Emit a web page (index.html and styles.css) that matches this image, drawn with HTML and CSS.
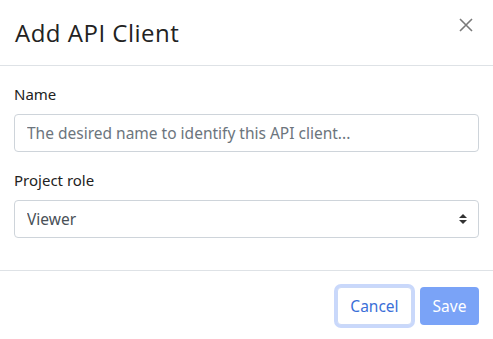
FILE: index.html
```html
<!DOCTYPE html>
<html lang="en">
<head>
    <meta charset="UTF-8">
    <meta name="viewport" content="width=device-width, initial-scale=1.0">
    <title>Add API Client</title>
    <link rel="stylesheet" href="styles.css">
</head>
<body>
    <div class="modal">
        <div class="modal-header">
            <h5 class="modal-title">Add API Client</h5>
            <button type="button" class="close" aria-label="Close">
                <svg width="14" height="14" viewBox="0 0 14 14">
                    <path d="M1 1 L13 13 M13 1 L1 13" stroke="#7a7a7a" stroke-width="1.6" fill="none"/>
                </svg>
            </button>
        </div>

        <div class="modal-body">
            <div class="form-group">
                <label for="name">Name</label>
                <input type="text" id="name" class="form-control" placeholder="The desired name to identify this API client...">
            </div>

            <div class="form-group">
                <label for="role">Project role</label>
                <div class="select-wrap">
                    <select id="role" class="form-control">
                        <option>Viewer</option>
                        <option>Editor</option>
                        <option>Owner</option>
                    </select>
                    <svg class="select-arrow" width="8" height="12" viewBox="0 0 8 12">
                        <path d="M0 5 L4 1 L8 5 Z M0 7 L8 7 L4 11 Z" fill="#333"/>
                    </svg>
                </div>
            </div>
        </div>

        <div class="modal-footer">
            <button type="button" class="btn btn-cancel">Cancel</button>
            <button type="button" class="btn btn-save" disabled>Save</button>
        </div>
    </div>
</body>
</html>
```

FILE: styles.css
```css
body {
    margin: 0;
    background: white;
    font-family: "Noto Sans", "Open Sans", sans-serif;
    color: #212529;
}

.modal {
    width: 493px;
    background: white;
}

.modal-header {
    display: flex;
    align-items: flex-start;
    justify-content: space-between;
    padding: 16px 15px 16px 15px;
    border-bottom: 1px solid #dee2e6;
}

.modal-title {
    margin: 0;
    font-family: "Open Sans", sans-serif;
    font-size: 24px;
    font-weight: 400;
    letter-spacing: 0.5px;
    line-height: 33px;
    color: #222;
}

.close {
    background: none;
    border: none;
    padding: 2px 5px 0 0;
    cursor: pointer;
}

.modal-body {
    padding: 16px 14px 0 14px;
}

.form-group {
    margin-bottom: 16px;
}

.form-group:last-child {
    margin-bottom: 32px;
}

label {
    display: block;
    margin-bottom: 8px;
    font-size: 15px;
    line-height: 24px;
    color: #222;
}

.form-control {
    display: block;
    width: 100%;
    height: 38px;
    padding: 6px 12px;
    box-sizing: border-box;
    border: 1px solid #ced4da;
    border-radius: 4px;
    background: white;
    font-family: inherit;
    font-size: 15.5px;
    color: #495057;
}

.form-control::placeholder {
    color: #6c757d;
}

.select-wrap {
    position: relative;
}

select.form-control {
    appearance: none;
    -webkit-appearance: none;
}

.select-arrow {
    position: absolute;
    right: 12px;
    top: 13px;
    pointer-events: none;
}

.modal-footer {
    display: flex;
    justify-content: flex-end;
    gap: 8px;
    padding: 16px 14px 13px 14px;
    border-top: 1px solid #dee2e6;
}

.btn {
    height: 38px;
    padding: 0 12px;
    border-radius: 4px;
    font-family: inherit;
    font-size: 15.5px;
    cursor: pointer;
}

.btn-cancel {
    background: white;
    color: #3a6fd8;
    border: 1px solid #cbd9f7;
    box-shadow: 0 0 0 3px #c9d8fb;
    width: 75px;
}

.btn-save {
    background: #7aa3f7;
    color: white;
    border: none;
    width: 59px;
}

.btn-save:disabled {
    cursor: not-allowed;
}
```
